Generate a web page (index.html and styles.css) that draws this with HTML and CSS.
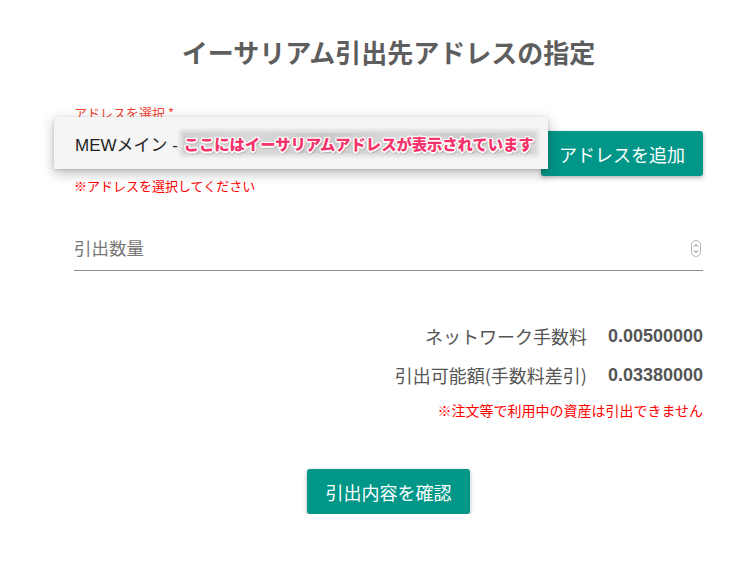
FILE: index.html
```html
<!DOCTYPE html>
<html lang="ja">
<head>
<meta charset="utf-8">
<title>イーサリアム引出先アドレスの指定</title>
<link rel="stylesheet" href="styles.css">
</head>
<body>
<main class="page">
  <h1 class="title">イーサリアム引出先アドレスの指定</h1>

  <section class="addr-row">
    <div class="select-col">
      <label class="select-label">アドレスを選択 *</label>
      <div class="select-box"></div>
      <div class="menu">
        <span class="menu-name">MEWメイン - </span><span class="menu-addr">ここにはイーサリアムアドレスが表示されています</span>
      </div>
    </div>
    <button class="btn btn-add" type="button">アドレスを追加</button>
  </section>
  <p class="error">※アドレスを選択してください</p>

  <div class="amount-field">
    <input class="amount-input" type="text" placeholder="引出数量">
    <svg class="spinner" width="10" height="17" viewBox="0 0 10 17" aria-hidden="true">
      <rect x="0.5" y="0.5" width="9" height="16" rx="4.5" fill="#fff" stroke="#b5b5b5"/>
      <path d="M3 6.5 L5 4.5 L7 6.5" fill="none" stroke="#666" stroke-width="1"/>
      <path d="M3 10.5 L5 12.5 L7 10.5" fill="none" stroke="#666" stroke-width="1"/>
    </svg>
  </div>

  <div class="fees">
    <div class="fee-row"><span class="fee-label">ネットワーク手数料</span><span class="fee-value">0.00500000</span></div>
    <div class="fee-row"><span class="fee-label">引出可能額(手数料差引)</span><span class="fee-value">0.03380000</span></div>
    <p class="note">※注文等で利用中の資産は引出できません</p>
  </div>

  <div class="actions">
    <button class="btn btn-confirm" type="button">引出内容を確認</button>
  </div>
</main>
</body>
</html>
```

FILE: styles.css
```css
* { box-sizing: border-box; }

body {
  margin: 0;
  background: #fff;
  font-family: "Liberation Sans", "Noto Sans CJK JP", sans-serif;
  color: #555;
}

.page {
  width: 629px;
  margin-left: 74px;
  padding-top: 34px;
}

.title {
  margin: 0;
  font-size: 26px;
  line-height: 36px;
  font-weight: bold;
  text-align: center;
  color: #5e5e5e;
  font-family: "Noto Sans CJK JP", sans-serif;
}

.addr-row {
  display: flex;
  margin-top: 35px;
}

.select-col {
  flex: 1;
  position: relative;
}

.select-label {
  display: block;
  font-size: 13px;
  line-height: 16px;
  color: #f44336;
  font-family: "Noto Sans CJK JP", sans-serif;
}

.select-box {
  height: 55px;
}

.menu {
  position: absolute;
  left: -20px;
  top: 12px;
  width: 494px;
  height: 52px;
  background: #f5f5f5;
  box-shadow: 0 4px 12px rgba(0, 0, 0, 0.28), 0 1px 3px rgba(0, 0, 0, 0.12);
  display: flex;
  align-items: center;
  padding-left: 21px;
  white-space: nowrap;
  z-index: 2;
}

.menu-name {
  font-size: 17px;
  color: #222;
  white-space: pre;
}

.menu-addr {
  font-family: "Noto Sans CJK JP", sans-serif;
  font-size: 15.3px;
  line-height: 20px;
  font-weight: 900;
  color: #f5336b;
  padding: 0 1px;
  background: linear-gradient(90deg, #cfcfcf 0%, #d9d9d9 20%, #c9c9c9 40%, #dadada 60%, #cbcbcb 80%, #d6d6d6 100%);
  box-shadow: 0 0 4px 3px #d8d8d8;
  text-shadow:
    1.5px 0 0 #fff, -1.5px 0 0 #fff, 0 1.5px 0 #fff, 0 -1.5px 0 #fff,
    1px 1px 0 #fff, -1px -1px 0 #fff, 1px -1px 0 #fff, -1px 1px 0 #fff,
    1px 2px 2px rgba(0, 0, 0, 0.4);
}

.btn {
  border: none;
  border-radius: 3px;
  background: #009688;
  color: #fff;
  font-family: "Noto Sans CJK JP", sans-serif;
  font-size: 18px;
  height: 45px;
  padding: 0 18px;
  box-shadow: 0 2px 4px rgba(0, 0, 0, 0.3);
  cursor: pointer;
}

.btn-add {
  align-self: flex-end;
  width: 162px;
  position: relative;
  z-index: 1;
}

.error {
  margin: 2px 0 0;
  font-size: 13px;
  line-height: 16px;
  color: #f00;
  font-family: "Noto Sans CJK JP", sans-serif;
}

.amount-field {
  margin-top: 31px;
  height: 46px;
  display: flex;
  align-items: center;
  border-bottom: 1px solid #8c8c8c;
}

.amount-input {
  flex: 1;
  border: none;
  outline: none;
  background: transparent;
  font-family: "Noto Sans CJK JP", sans-serif;
  font-size: 17.5px;
  color: #555;
  padding: 0;
}

.amount-input::placeholder {
  color: #777;
}

.spinner {
  margin-right: 2px;
  margin-top: 1px;
}

.fees {
  margin-top: 53px;
  display: flex;
  flex-direction: column;
  align-items: flex-end;
  gap: 15px;
}

.fee-row {
  display: flex;
  gap: 21px;
  line-height: 24px;
  font-size: 18px;
}

.fee-label {
  font-family: "Noto Sans CJK JP", sans-serif;
  color: #555;
}

.fee-value {
  font-size: 18px;
  font-weight: bold;
  color: #555;
}

.note {
  margin: 0;
  font-size: 14px;
  line-height: 16px;
  color: #f00;
  font-family: "Noto Sans CJK JP", sans-serif;
}

.actions {
  margin-top: 51px;
  display: flex;
  justify-content: center;
}

.btn-confirm {
  width: 163px;
}
```
